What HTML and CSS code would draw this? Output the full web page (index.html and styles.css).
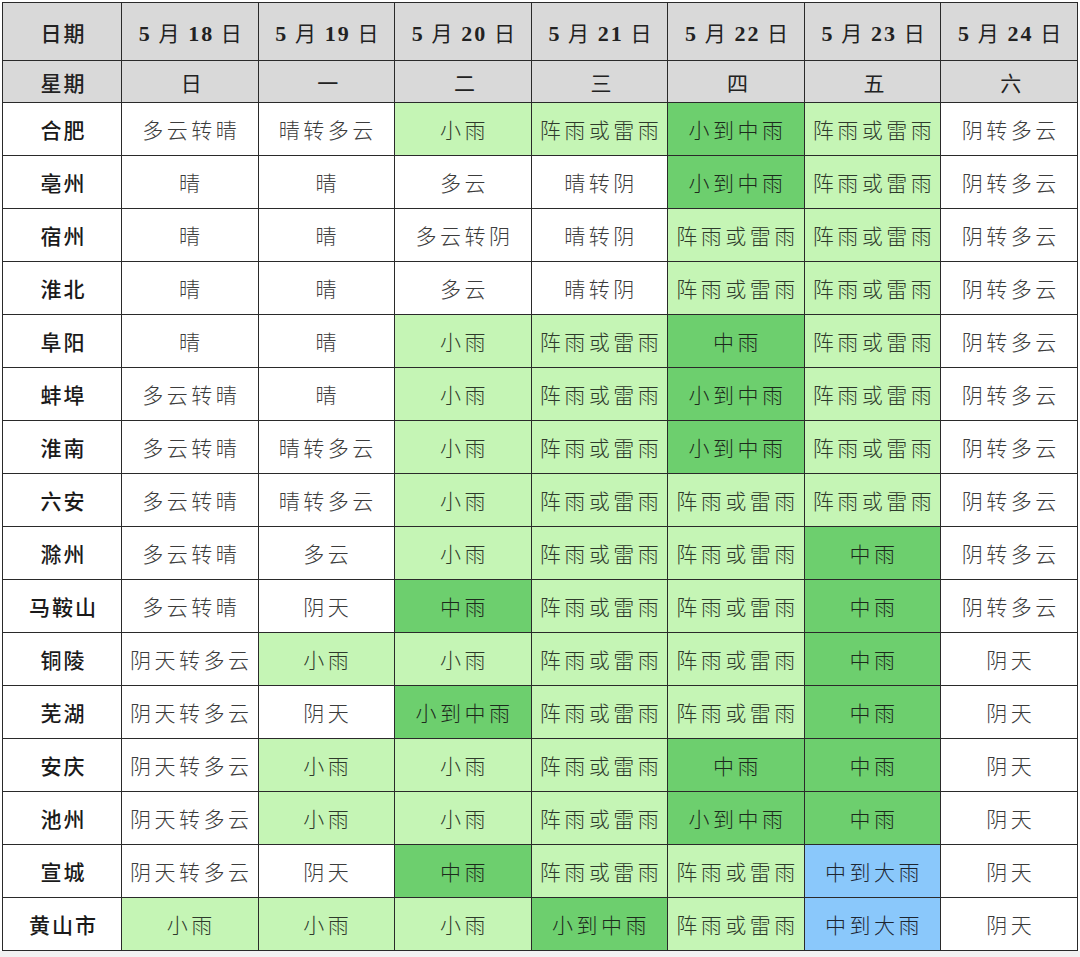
FILE: index.html
```html
<!DOCTYPE html>
<html lang="zh">
<head>
<meta charset="utf-8">
<link rel="stylesheet" href="styles.css">
</head>
<body>
<div class="sheet">
<table class="wx">
<colgroup><col class="c-city"><col><col><col><col><col><col><col></colgroup>
<thead>
<tr class="r-date"><th>日期</th><th><span class="n">5</span> 月 <span class="n">18</span> 日</th><th><span class="n">5</span> 月 <span class="n">19</span> 日</th><th><span class="n">5</span> 月 <span class="n">20</span> 日</th><th><span class="n">5</span> 月 <span class="n">21</span> 日</th><th><span class="n">5</span> 月 <span class="n">22</span> 日</th><th><span class="n">5</span> 月 <span class="n">23</span> 日</th><th><span class="n">5</span> 月 <span class="n">24</span> 日</th></tr>
<tr class="r-week"><th>星期</th><th>日</th><th>一</th><th>二</th><th>三</th><th>四</th><th>五</th><th>六</th></tr>
</thead>
<tbody>
<tr><th>合肥</th><td>多云转晴</td><td>晴转多云</td><td class="l">小雨</td><td class="l">阵雨或雷雨</td><td class="d">小到中雨</td><td class="l">阵雨或雷雨</td><td>阴转多云</td></tr>
<tr><th>亳州</th><td>晴</td><td>晴</td><td>多云</td><td>晴转阴</td><td class="d">小到中雨</td><td class="l">阵雨或雷雨</td><td>阴转多云</td></tr>
<tr><th>宿州</th><td>晴</td><td>晴</td><td>多云转阴</td><td>晴转阴</td><td class="l">阵雨或雷雨</td><td class="l">阵雨或雷雨</td><td>阴转多云</td></tr>
<tr><th>淮北</th><td>晴</td><td>晴</td><td>多云</td><td>晴转阴</td><td class="l">阵雨或雷雨</td><td class="l">阵雨或雷雨</td><td>阴转多云</td></tr>
<tr><th>阜阳</th><td>晴</td><td>晴</td><td class="l">小雨</td><td class="l">阵雨或雷雨</td><td class="d">中雨</td><td class="l">阵雨或雷雨</td><td>阴转多云</td></tr>
<tr><th>蚌埠</th><td>多云转晴</td><td>晴</td><td class="l">小雨</td><td class="l">阵雨或雷雨</td><td class="d">小到中雨</td><td class="l">阵雨或雷雨</td><td>阴转多云</td></tr>
<tr><th>淮南</th><td>多云转晴</td><td>晴转多云</td><td class="l">小雨</td><td class="l">阵雨或雷雨</td><td class="d">小到中雨</td><td class="l">阵雨或雷雨</td><td>阴转多云</td></tr>
<tr><th>六安</th><td>多云转晴</td><td>晴转多云</td><td class="l">小雨</td><td class="l">阵雨或雷雨</td><td class="l">阵雨或雷雨</td><td class="l">阵雨或雷雨</td><td>阴转多云</td></tr>
<tr><th>滁州</th><td>多云转晴</td><td>多云</td><td class="l">小雨</td><td class="l">阵雨或雷雨</td><td class="l">阵雨或雷雨</td><td class="d">中雨</td><td>阴转多云</td></tr>
<tr><th>马鞍山</th><td>多云转晴</td><td>阴天</td><td class="d">中雨</td><td class="l">阵雨或雷雨</td><td class="l">阵雨或雷雨</td><td class="d">中雨</td><td>阴转多云</td></tr>
<tr><th>铜陵</th><td>阴天转多云</td><td class="l">小雨</td><td class="l">小雨</td><td class="l">阵雨或雷雨</td><td class="l">阵雨或雷雨</td><td class="d">中雨</td><td>阴天</td></tr>
<tr><th>芜湖</th><td>阴天转多云</td><td>阴天</td><td class="d">小到中雨</td><td class="l">阵雨或雷雨</td><td class="l">阵雨或雷雨</td><td class="d">中雨</td><td>阴天</td></tr>
<tr><th>安庆</th><td>阴天转多云</td><td class="l">小雨</td><td class="l">小雨</td><td class="l">阵雨或雷雨</td><td class="d">中雨</td><td class="d">中雨</td><td>阴天</td></tr>
<tr><th>池州</th><td>阴天转多云</td><td class="l">小雨</td><td class="l">小雨</td><td class="l">阵雨或雷雨</td><td class="d">小到中雨</td><td class="d">中雨</td><td>阴天</td></tr>
<tr><th>宣城</th><td>阴天转多云</td><td>阴天</td><td class="d">中雨</td><td class="l">阵雨或雷雨</td><td class="l">阵雨或雷雨</td><td class="b">中到大雨</td><td>阴天</td></tr>
<tr><th>黄山市</th><td class="l">小雨</td><td class="l">小雨</td><td class="l">小雨</td><td class="d">小到中雨</td><td class="l">阵雨或雷雨</td><td class="b">中到大雨</td><td>阴天</td></tr>
</tbody>
</table>
</div>
</body>
</html>
```

FILE: styles.css
```css
html, body {
  margin: 0;
  padding: 0;
  background: #f2f2f2;
}
.sheet {
  background: #ffffff;
  height: 951px;
  padding: 2px 0 0 2px;
  box-sizing: border-box;
}
.wx {
  border-collapse: collapse;
  table-layout: fixed;
  width: 1076px;
  font-family: "Noto Sans CJK SC", "Noto Sans", sans-serif;
}
.c-city { width: 119px; }
.wx th, .wx td {
  border: 1px solid #2a2a2a;
  text-align: center;
  vertical-align: middle;
  padding: 0 0 0 3px;
  white-space: nowrap;
  overflow: hidden;
}
.wx td {
  font-size: 21px;
  font-weight: 300;
  letter-spacing: 3.5px;
  color: #3c3c3c;
  height: 52px;
}
.wx tbody th {
  font-size: 21px;
  font-weight: 500;
  letter-spacing: 2px;
  color: #1a1a1a;
  height: 52px;
}
.r-date th {
  background: #d9d9d9;
  height: 57px;
  font-size: 21px;
  font-weight: 400;
  letter-spacing: 2px;
  color: #222;
}
.r-date .n {
  font-family: "Liberation Serif", serif;
  font-weight: 700;
  font-size: 22px;
}
.r-date th:first-child {
  font-weight: 500;
  letter-spacing: 2px;
}
.r-week th {
  background: #d9d9d9;
  height: 41px;
  font-size: 21px;
  font-weight: 400;
  color: #222;
}
.r-week th:first-child {
  font-weight: 500;
  letter-spacing: 2px;
}
.wx td.l { background: #c5f5b5; color: #2f3a2c; }
.wx td.d { background: #6dcf6e; color: #1d2a1d; }
.wx td.b { background: #8ac8fb; color: #1d2530; }
```
